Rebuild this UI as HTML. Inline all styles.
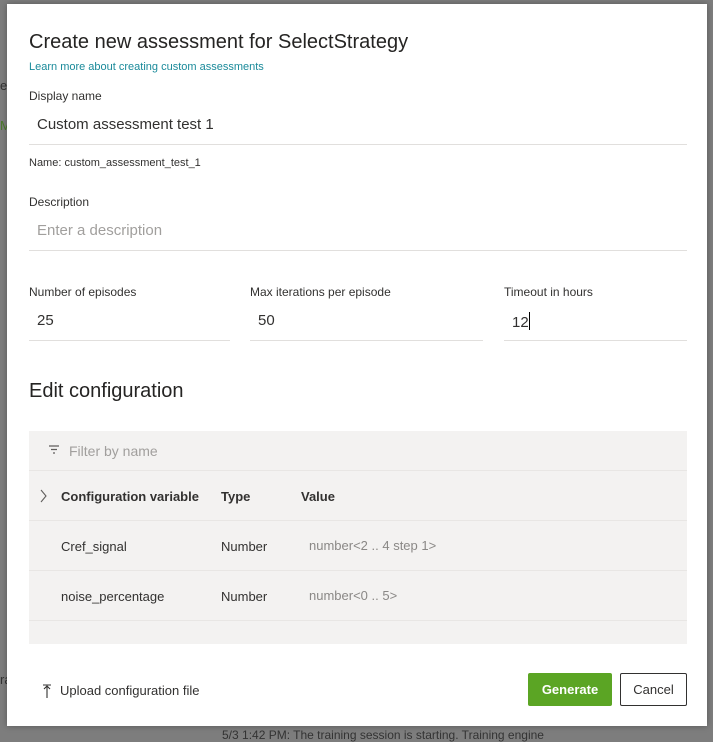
<!DOCTYPE html>
<html><head><style>
*{margin:0;padding:0;box-sizing:border-box}
html,body{width:713px;height:735px}
body{background:#7d7d7d;position:relative;overflow:hidden;font-family:"Liberation Sans",sans-serif;color:#323130}
.m{position:absolute;left:7px;top:4px;width:700px;height:722px;background:#fff;box-shadow:0 0 6px rgba(0,0,0,.3)}
.a{position:absolute;white-space:nowrap}
.ln{position:absolute;height:1px;background:#e1dfdd}
.lab{font-size:12px;color:#323130}
.in{font-size:15px;color:#323130}
</style></head><body>
<div class="a" style="left:0;top:78px;font-size:13px;color:#333">e</div>
<div class="a" style="left:0;top:118px;font-size:13px;color:#4a7a2a">M</div>
<div class="a" style="left:0;top:672px;font-size:13px;color:#333">ra</div>
<div class="a" style="left:222px;top:728px;font-size:12px;color:#333">5/3 1:42 PM: The training session is starting. Training engine</div>
<div class="m"></div>
<div class="a" style="left:29px;top:31px;font-size:20px;color:#252423">Create new assessment for SelectStrategy</div>
<div class="a" style="left:29px;top:61px;font-size:11px;color:#1a8a9a">Learn more about creating custom assessments</div>
<div class="a lab" style="left:29px;top:89px">Display name</div>
<div class="a in" style="left:37px;top:116px">Custom assessment test 1</div>
<div class="ln" style="left:29px;top:144px;width:658px"></div>
<div class="a" style="left:29px;top:157px;font-size:11px">Name: custom_assessment_test_1</div>
<div class="a lab" style="left:29px;top:195px">Description</div>
<div class="a in" style="left:37px;top:222px;color:#a19f9d">Enter a description</div>
<div class="ln" style="left:29px;top:250px;width:658px"></div>
<div class="a lab" style="left:29px;top:285px">Number of episodes</div>
<div class="a lab" style="left:250px;top:285px">Max iterations per episode</div>
<div class="a lab" style="left:504px;top:285px">Timeout in hours</div>
<div class="a in" style="left:37px;top:312px">25</div>
<div class="a in" style="left:258px;top:312px">50</div>
<div class="a in" style="left:512px;top:312px">12<span style="display:inline-block;width:1px;height:18px;background:#000;vertical-align:-3px"></span></div>
<div class="ln" style="left:29px;top:340px;width:201px"></div>
<div class="ln" style="left:250px;top:340px;width:233px"></div>
<div class="ln" style="left:504px;top:340px;width:183px"></div>
<div class="a" style="left:29px;top:380px;font-size:20px;color:#252423">Edit configuration</div>
<div style="position:absolute;left:29px;top:431px;width:658px;height:213px;background:#f3f2f1"></div>
<svg class="a" style="left:48px;top:444px" width="12" height="12"><path d="M1 2h10M3 5.5h6M5 9h2" stroke="#605e5c" stroke-width="1.2"/></svg>
<div class="a" style="left:69px;top:443px;font-size:14px;color:#a19f9d">Filter by name</div>
<div class="ln" style="left:29px;top:470px;width:658px;background:#e8e6e4"></div>
<svg class="a" style="left:40px;top:489px" width="8" height="14"><path d="M1 1l5 6-5 6" fill="none" stroke="#605e5c" stroke-width="1.1"/></svg>
<div class="a" style="left:61px;top:489px;font-size:13px;font-weight:bold;color:#323130">Configuration variable</div>
<div class="a" style="left:221px;top:489px;font-size:13px;font-weight:bold">Type</div>
<div class="a" style="left:301px;top:489px;font-size:13px;font-weight:bold">Value</div>
<div class="ln" style="left:29px;top:520px;width:658px;background:#e8e6e4"></div>
<div class="a" style="left:61px;top:539px;font-size:13px">Cref_signal</div>
<div class="a" style="left:221px;top:539px;font-size:13px">Number</div>
<div class="a" style="left:309px;top:538px;font-size:13px;color:#8a8886">number&lt;2 .. 4 step 1&gt;</div>
<div class="ln" style="left:29px;top:570px;width:658px;background:#e8e6e4"></div>
<div class="a" style="left:61px;top:589px;font-size:13px">noise_percentage</div>
<div class="a" style="left:221px;top:589px;font-size:13px">Number</div>
<div class="a" style="left:309px;top:588px;font-size:13px;color:#8a8886">number&lt;0 .. 5&gt;</div>
<div class="ln" style="left:29px;top:620px;width:658px;background:#e8e6e4"></div>
<svg class="a" style="left:42px;top:684px" width="10" height="14"><path d="M1 1h8M5 2v12M2 5l3-3 3 3" fill="none" stroke="#323130" stroke-width="1.1"/></svg>
<div class="a" style="left:60px;top:683px;font-size:13px">Upload configuration file</div>
<div class="a" style="left:528px;top:673px;width:84px;height:33px;background:#5ba524;border-radius:2px;color:#fff;font-size:13px;font-weight:bold;text-align:center;line-height:33px">Generate</div>
<div class="a" style="left:620px;top:673px;width:67px;height:33px;border:1px solid #323130;border-radius:2px;font-size:13px;text-align:center;line-height:31px">Cancel</div>
</body></html>
